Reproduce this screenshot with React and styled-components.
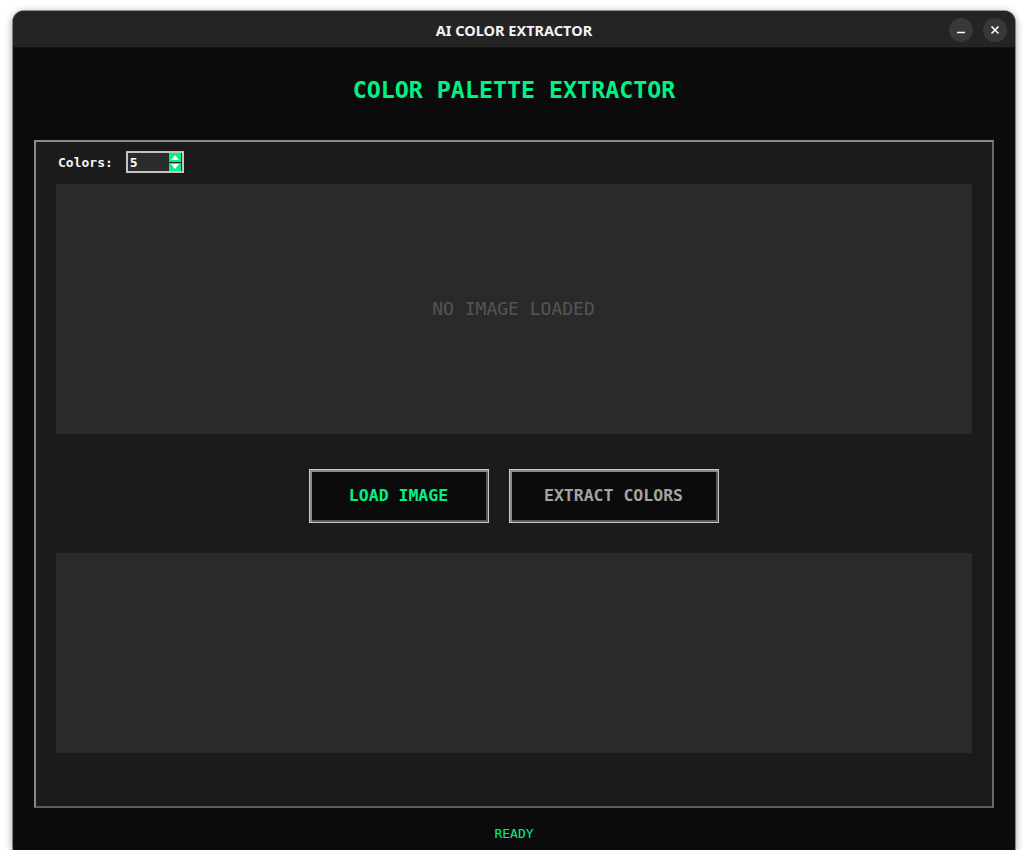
import React from 'react';
import styled, { createGlobalStyle } from 'styled-components';

const GREEN = '#00f283';
const MONO = '"DejaVu Sans Mono", "Liberation Mono", monospace';

const Global = createGlobalStyle`
  html, body {
    margin: 0;
    padding: 0;
    background: #ffffff;
  }
`;

const Window = styled.div`
  width: 1002px;
  height: 839px;
  margin: 11px 0 0 13px;
  display: flex;
  flex-direction: column;
  background: #0b0b0b;
  border-radius: 11px 11px 0 0;
  box-shadow: 0 2px 8px rgba(0, 0, 0, 0.45), 0 0 0 1px rgba(0, 0, 0, 0.35);
  overflow: hidden;
`;

const TitleBar = styled.div`
  position: relative;
  height: 37px;
  flex: none;
  display: flex;
  align-items: center;
  justify-content: center;
  padding-top: 2px;
  background: #242424;
  border-bottom: 1px solid #121212;
  box-sizing: border-box;
  font-family: "Noto Sans", "Open Sans", sans-serif;
  font-weight: 700;
  font-size: 14.5px;
  color: #f2f2f2;
`;

// window buttons sit over the right end of the title bar
const Controls = styled.div`
  position: absolute;
  right: 8px;
  top: 7px;
  display: flex;
  gap: 10px;
`;

const CtrlButton = styled.div`
  width: 24px;
  height: 24px;
  border-radius: 50%;
  background: #383838;
  display: flex;
  align-items: center;
  justify-content: center;
`;

const Body = styled.div`
  flex: 1;
  display: flex;
  flex-direction: column;
  padding: 0 21px;
`;

const Heading = styled.h1`
  margin: 28px 0 0;
  height: 64px;
  text-align: center;
  font-family: ${MONO};
  font-weight: 700;
  font-size: 23.3px;
  line-height: 28px;
  color: ${GREEN};
`;

const Panel = styled.div`
  height: 668px;
  flex: none;
  box-sizing: border-box;
  background: #1b1b1b;
  border: 2px solid;
  border-color: #8a8a8a #6a6a6a #5c5c5c #8a8a8a;
  padding: 9px 20px 0;
  display: flex;
  flex-direction: column;
`;

const OptionsRow = styled.div`
  height: 22px;
  display: flex;
  align-items: center;
  gap: 13px;
  padding-left: 2px;
`;

const Label = styled.span`
  font-family: ${MONO};
  font-weight: 700;
  font-size: 13px;
  color: #f4f4f4;
`;

const Spin = styled.div`
  width: 58px;
  height: 22px;
  box-sizing: border-box;
  border: 2px solid #c4c4c4;
  background: #2b2b2b;
  display: flex;
  align-items: center;
  justify-content: space-between;
  padding: 0 1px 0 2px;
`;

const SpinValue = styled.span`
  font-family: ${MONO};
  font-weight: 700;
  font-size: 13px;
  color: #ffffff;
`;

const SpinArrows = styled.div`
  width: 12px;
  height: 18px;
  display: flex;
  flex-direction: column;
  gap: 1px;
`;

const Arrow = styled.div`
  flex: 1;
  background: ${GREEN};
  display: flex;
  align-items: center;
  justify-content: center;
`;

const Area = styled.div`
  height: ${(p) => p.$h}px;
  margin-top: ${(p) => p.$mt}px;
  flex: none;
  background: #2a2a2a;
  display: flex;
  align-items: center;
  justify-content: center;
`;

const Placeholder = styled.span`
  font-family: ${MONO};
  font-size: 18px;
  color: #555555;
  padding-right: 1px;
  margin-top: -2px;
`;

const ButtonRow = styled.div`
  margin-top: 35px;
  display: flex;
  justify-content: center;
  gap: 20px;
  padding-right: 1px;
`;

const Button = styled.button`
  width: ${(p) => p.$w}px;
  height: 54px;
  box-sizing: border-box;
  padding: 0 0 2px;
  background: #0b0b0b;
  border: 1px solid #c8c8c8;
  box-shadow: inset 2px 2px 0 #8c8c8c, inset -2px -2px 0 #5a5a5a;
  font-family: ${MONO};
  font-weight: 700;
  font-size: 16.5px;
  color: ${(p) => (p.$primary ? GREEN : '#a3a3a3')};
  cursor: pointer;
`;

const Status = styled.div`
  flex: 1;
  display: flex;
  align-items: center;
  justify-content: center;
  padding-top: 9px;
  font-family: ${MONO};
  font-size: 13px;
  color: ${GREEN};
`;

const App = () => (
  <>
    <Global />
    <Window>
      <TitleBar>
        AI COLOR EXTRACTOR
        <Controls>
          <CtrlButton>
            <svg width="10" height="10" viewBox="0 0 10 10">
              <path d="M1 7.5h8" stroke="#fff" strokeWidth="1.6" />
            </svg>
          </CtrlButton>
          <CtrlButton>
            <svg width="10" height="10" viewBox="0 0 10 10">
              <path d="M1.5 1.5l7 7M8.5 1.5l-7 7" stroke="#fff" strokeWidth="1.6" />
            </svg>
          </CtrlButton>
        </Controls>
      </TitleBar>
      <Body>
        <Heading>COLOR PALETTE EXTRACTOR</Heading>
        <Panel>
          <OptionsRow>
            <Label>Colors:</Label>
            <Spin>
              <SpinValue>5</SpinValue>
              <SpinArrows>
                <Arrow>
                  <svg width="8" height="5" viewBox="0 0 8 5">
                    <path d="M0 5L4 0l4 5z" fill="#fff" />
                  </svg>
                </Arrow>
                <Arrow>
                  <svg width="8" height="5" viewBox="0 0 8 5">
                    <path d="M0 0l4 5 4-5z" fill="#fff" />
                  </svg>
                </Arrow>
              </SpinArrows>
            </Spin>
          </OptionsRow>
          <Area $h={250} $mt={11}>
            <Placeholder>NO IMAGE LOADED</Placeholder>
          </Area>
          <ButtonRow>
            <Button $w={180} $primary>LOAD IMAGE</Button>
            <Button $w={210}>EXTRACT COLORS</Button>
          </ButtonRow>
          <Area $h={200} $mt={30} />
        </Panel>
        <Status>READY</Status>
      </Body>
    </Window>
  </>
);

export default App;
